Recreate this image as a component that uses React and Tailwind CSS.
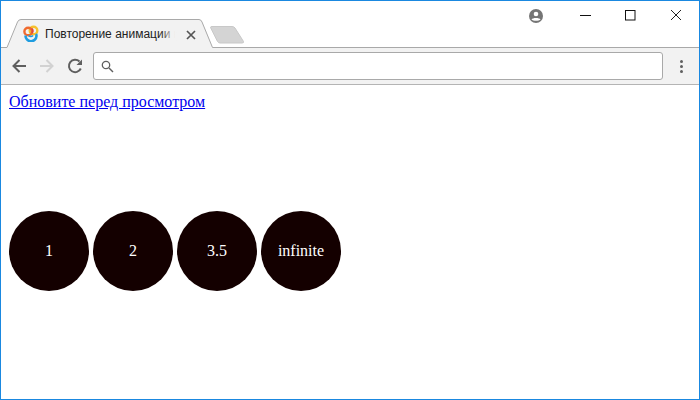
const circles = ["1", "2", "3.5", "infinite"];

const TabLogo = () => (
  <svg width="16" height="17" viewBox="0 0 16 17" fill="none">
    <circle cx="10.500" cy="5.500" r="3.800" stroke="#f6c12d" strokeWidth="2.400" />
    <circle cx="5.200" cy="6.500" r="3.800" stroke="#ef6a2e" strokeWidth="2.400" />
    <path d="M2.500 10.500A5.500 5.500 0 0 0 13.500 11C13.500 10 13.300 9.500 13 9" stroke="#1f9de0" strokeWidth="2.600" />
    <path d="M5.500 10.500A3 3 0 0 0 10 10.500" stroke="#1f9de0" strokeWidth="1.500" />
    <path d="M9 3.500A3.800 3.800 0 0 1 9 8" stroke="#e2483a" strokeWidth="1.800" />
  </svg>
);

const TabStrip = () => (
  <div className="relative h-[47px] shrink-0 bg-white">
    <svg className="absolute left-0 top-0" width="698" height="47" viewBox="0 0 698 47" fill="none">
      <path d="M6 47L17 20.500Q18 18.500 20 18.500H198Q200 18.500 201 20.500L212 47Z" fill="#f2f2f2" />
      <path d="M0 46.500H6L16.500 21Q17.500 18.500 20 18.500H198Q200 18.500 201 21L211.500 46.500H698" stroke="#a9a9a9" />
      <path d="M209.500 26.500Q209.500 25.500 211 25.500H231Q233 25.500 234 27L242.500 40.500Q243 42 241 42H219Q217.500 42 216.500 40.500Z" fill="#d4d4d4" stroke="#c8c8c8" />
    </svg>
    <div className="absolute left-[22px] top-[24px]">
      <TabLogo />
    </div>
    <span className="absolute left-[44px] top-[25px] whitespace-nowrap text-[12px] leading-[16px] text-[#222] [font-family:'Liberation_Sans',sans-serif]">
      Повторение анимации в
    </span>
    <div className="absolute left-[160px] top-[24px] h-[18px] w-[20px] bg-gradient-to-r from-transparent via-[#f2f2f2] via-70% to-[#f2f2f2]" />
    <svg className="absolute left-[185px] top-[29px]" width="10" height="10" viewBox="0 0 10 10">
      <path d="M1 1L9 9M9 1L1 9" stroke="#555" strokeWidth="1.700" />
    </svg>
    <svg className="absolute left-[527px] top-[7px]" width="16" height="16" viewBox="0 0 16 16">
      <circle cx="8" cy="8" r="7" fill="#757575" />
      <circle cx="8" cy="6" r="2.300" fill="#fff" />
      <path d="M3.500 11.500C4.500 9.500 11.500 9.500 12.500 11.500C11 13.300 5 13.300 3.500 11.500Z" fill="#fff" />
    </svg>
    <svg className="absolute left-[579px] top-[14px]" width="11" height="2" viewBox="0 0 11 2">
      <path d="M0 .5H11" stroke="#111" />
    </svg>
    <svg className="absolute left-[624px] top-[9px]" width="11" height="11" viewBox="0 0 11 11" fill="none">
      <rect x=".5" y=".5" width="9.500" height="9.500" stroke="#111" />
    </svg>
    <svg className="absolute left-[669px] top-[8px]" width="12" height="12" viewBox="0 0 12 12" fill="none">
      <path d="M1 1L11 11M11 1L1 11" stroke="#222" />
    </svg>
  </div>
);

const Toolbar = () => (
  <div className="flex h-[37px] shrink-0 items-center border-b border-[#b4b4b4] bg-[#f2f2f2] pl-[10px]">
    <svg width="16" height="16" viewBox="0 0 16 16" fill="none" className="shrink-0">
      <path d="M15 8H2.500M8.500 2L2.500 8L8.500 14" stroke="#5f5f5f" strokeWidth="2" />
    </svg>
    <svg width="16" height="16" viewBox="0 0 16 16" fill="none" className="ml-[12px] shrink-0">
      <path d="M1 8H13.500M7.500 2L13.500 8L7.500 14" stroke="#d2d2d2" strokeWidth="2" />
    </svg>
    <svg width="16" height="16" viewBox="0 0 16 16" fill="none" className="ml-[12px] shrink-0">
      <path d="M13.800 10.500A6.200 6.200 0 1 1 12.500 3.500" stroke="#5f5f5f" strokeWidth="2" />
      <path d="M9.500 7H15V1.500Z" fill="#5f5f5f" />
    </svg>
    <div className="ml-[10px] flex h-[28px] w-[570px] items-center rounded-[3px] border border-[#a9a9a9] bg-white pl-[7px]">
      <svg width="13" height="13" viewBox="0 0 13 13" fill="none">
        <circle cx="5" cy="5" r="3.700" stroke="#5f5f5f" strokeWidth="1.300" />
        <path d="M8 8L12 12" stroke="#5f5f5f" strokeWidth="1.500" />
      </svg>
    </div>
    <div className="ml-[17px] flex flex-col gap-[2px]">
      <span className="h-[3px] w-[3px] rounded-full bg-[#5f5f5f]" />
      <span className="h-[3px] w-[3px] rounded-full bg-[#5f5f5f]" />
      <span className="h-[3px] w-[3px] rounded-full bg-[#5f5f5f]" />
    </div>
  </div>
);

export default function App() {
  return (
    <div className="flex h-[400px] w-[700px] flex-col overflow-hidden border border-[#1a88e0] bg-white">
      <TabStrip />
      <Toolbar />
      <div className="px-2 pt-2 text-[16px] leading-[18px] text-black [font-family:'Liberation_Serif',serif]">
        <a href="#" className="text-[#0000ee] underline">
          Обновите перед просмотром
        </a>
        <div className="mt-[100px] flex gap-1">
          {circles.map((label) => (
            <div
              key={label}
              className="flex h-20 w-20 items-center justify-center rounded-full bg-[#140000] text-white"
            >
              {label}
            </div>
          ))}
        </div>
      </div>
    </div>
  );
}
